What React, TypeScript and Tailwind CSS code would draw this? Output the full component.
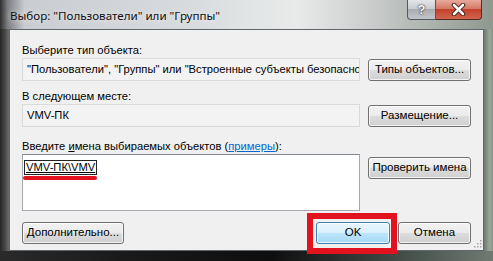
import React from 'react'

function Btn({
  children,
  className = '',
  primary = false,
}: {
  children: React.ReactNode
  className?: string
  primary?: boolean
}) {
  const skin = primary
    ? 'border-[#3c7fb1] bg-[linear-gradient(#eaf6fd_0%,#d9f0fc_48%,#bee6fd_50%,#a7d9f5_100%)]'
    : 'border-[#707070] bg-[linear-gradient(#f2f2f2_0%,#ebebeb_48%,#dddddd_50%,#cfcfcf_100%)]'
  return (
    <button
      className={`h-[22px] rounded-[3px] border ${skin} shadow-[inset_0_0_0_1px_rgba(255,255,255,0.75)] text-[11.5px] leading-none text-black whitespace-nowrap shrink-0 ${className}`}
    >
      {children}
    </button>
  )
}

export default function App() {
  return (
    <div className="relative w-[493px] h-[261px] overflow-hidden flex flex-col font-['Liberation_Sans',Arial,sans-serif] bg-[linear-gradient(90deg,#2f2f2f_0%,#7a7c80_1.5%,#c9ccd0_5%,#d9dcdf_40%,#e9ebea_60%,#c4c7c5_78%,#8e988e_100%)]">
      {/* title bar */}
      <div className="h-[29px] flex items-start justify-between shrink-0">
        <div className="pl-[10px] pt-[7px] font-['Noto_Sans',sans-serif] text-[11.6px] text-[#111] [text-shadow:0_0_6px_rgba(255,255,255,0.9)] whitespace-nowrap">
          Выбор: "Пользователи" или "Группы"
        </div>
        <div className="flex mr-[11px]">
          <div className="w-[29px] h-[20px] rounded-bl-[4px] border border-t-0 border-[#54585e] bg-[linear-gradient(#e4e6e8_0%,#c9ccd0_45%,#a9adb2_50%,#c2c6c9_100%)] flex items-center justify-center text-white font-bold text-[13px] [text-shadow:0_0_2px_#333,0_0_1px_#000]">
            ?
          </div>
          <div className="w-[46px] h-[20px] rounded-br-[4px] border border-t-0 border-l-0 border-[#5a2a22] bg-[linear-gradient(#e9a99b_0%,#d47a66_45%,#c4412c_50%,#d0654f_100%)] flex items-center justify-center">
            <svg width="15" height="13" viewBox="0 0 15 13">
              <path d="M3 2 L12 11 M12 2 L3 11" stroke="#3a1a14" strokeWidth="4.5" strokeLinecap="round" />
              <path d="M3 2 L12 11 M12 2 L3 11" stroke="#fff" strokeWidth="2.6" strokeLinecap="round" />
            </svg>
          </div>
        </div>
      </div>

      {/* middle */}
      <div className="flex flex-1 min-h-0">
        <div className="w-[9px] shrink-0 bg-[linear-gradient(90deg,#262626,#4a4a4a_60%,#6c6c6c)]" />
        <div className="flex-1 border border-[#5f666c] bg-[#f0f0f0] pl-[12px] pr-[12px] pt-[12px] text-[11.2px] text-black flex flex-col">
          <div className="h-[16px] leading-[16px]">Выберите тип объекта:</div>
          <div className="flex items-center gap-[8px]">
            <div className="w-[338px] h-[23px] border border-[#dadada] bg-[#f3f3f3] px-[4px] leading-[21px] whitespace-nowrap overflow-hidden">
              "Пользователи", "Группы" или "Встроенные субъекты безопасности"
            </div>
            <Btn className="w-[103px]">Типы объектов...</Btn>
          </div>

          <div className="h-[16px] leading-[16px] mt-[7px]">В следующем месте:</div>
          <div className="flex items-center gap-[8px]">
            <div className="w-[338px] h-[23px] border border-[#dadada] bg-[#f3f3f3] px-[4px] leading-[21px] whitespace-nowrap overflow-hidden">
              VMV-ПК
            </div>
            <Btn className="w-[103px]">Размещение...</Btn>
          </div>

          <div className="h-[16px] leading-[16px] mt-[11px]">
            Введите <span className="underline">и</span>мена выбираемых объектов (
            <span className="text-[#0066cc] underline">примеры</span>):
          </div>
          <div className="flex items-start gap-[8px]">
            <div className="w-[338px] h-[57px] border border-[#a5a9b0] border-t-[#7f8590] bg-white pl-[1px] pt-[4px]">
              <span className="inline-block border border-[#222] px-[1px] leading-[13px] underline">VMV-ПК\VMV</span>
            </div>
            <Btn className="w-[103px] mt-[3px]">Проверить имена</Btn>
          </div>

          <div className="flex items-center mt-[11px]">
            <Btn className="w-[102px]">Дополнительно...</Btn>
            <div className="flex-1" />
            <Btn primary className="w-[74px]">OK</Btn>
            <Btn className="w-[73px] ml-[8px]">Отмена</Btn>
          </div>
        </div>
        <div className="w-[11px] shrink-0 bg-[linear-gradient(90deg,#6e7a6e,#9aa69a_50%,#7c887c)]" />
      </div>

      {/* bottom frame */}
      <div className="h-[10px] shrink-0 bg-[linear-gradient(90deg,#2a2a2a,#1a1a1a_25%,#0e0e0e_55%,#4a5650_85%,#6e7a72)]" />

      {/* resize grip */}
      <svg className="absolute left-[472px] top-[238px]" width="10" height="10" viewBox="0 0 10 10">
        {[
          [8, 2],
          [8, 5],
          [5, 5],
          [8, 8],
          [5, 8],
          [2, 8],
        ].map(([x, y], i) => (
          <rect key={i} x={x} y={y} width="1.5" height="1.5" fill="#a9a9a9" />
        ))}
      </svg>

      {/* annotations */}
      <div className="absolute left-[23px] top-[176px] w-[74px] h-[4px] rounded-full bg-[#e3121f]" />
      <div className="absolute left-[307px] top-[213px] w-[90px] h-[41px] border-[6px] border-[#e3121f]" />
    </div>
  )
}
